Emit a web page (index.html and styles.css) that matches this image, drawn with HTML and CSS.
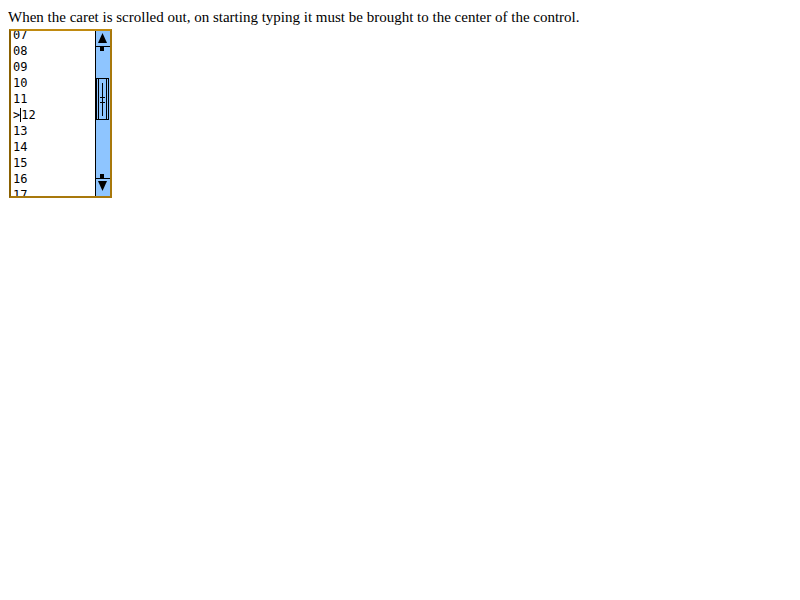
FILE: index.html
```html
<!DOCTYPE html>
<html>
<head>
<meta charset="utf-8">
<link rel="stylesheet" href="styles.css">
</head>
<body>
<p class="intro">When the caret is scrolled out, on starting typing it must be brought to the center of the control.</p>
<div class="box">
  <div class="view">
    <div class="lines">
      <div class="line">07</div>
      <div class="line">08</div>
      <div class="line">09</div>
      <div class="line">10</div>
      <div class="line">11</div>
      <div class="line">&gt;<span class="caret"></span>12</div>
      <div class="line">13</div>
      <div class="line">14</div>
      <div class="line">15</div>
      <div class="line">16</div>
      <div class="line">17</div>
    </div>
  </div>
  <svg class="scroll" width="15" height="165" viewBox="0 0 15 165">
    <rect x="0" y="0" width="15" height="165" fill="#8ec5ff"/>
    <rect x="0" y="0" width="1" height="165" fill="#000"/>
    <rect x="0" y="15" width="15" height="1" fill="#000"/>
    <polygon points="7.5,2 3,12 12,12" fill="#000"/>
    <rect x="5" y="16" width="4" height="4" fill="#000"/>
    <rect x="1.5" y="47.5" width="12" height="41" fill="none" stroke="#000"/>
    <line x1="3.5" y1="48" x2="3.5" y2="88" stroke="#000"/>
    <line x1="11.5" y1="48" x2="11.5" y2="88" stroke="#000"/>
    <line x1="7.5" y1="52" x2="7.5" y2="85" stroke="#000"/>
    <line x1="5" y1="66.5" x2="10" y2="66.5" stroke="#000"/>
    <line x1="5" y1="71.5" x2="10" y2="71.5" stroke="#000"/>
    <rect x="5" y="143" width="4" height="4" fill="#000"/>
    <rect x="0" y="147" width="15" height="1" fill="#000"/>
    <polygon points="3,150 12,150 7.5,160" fill="#000"/>
  </svg>
</div>
</body>
</html>
```

FILE: styles.css
```css
body {
  margin: 8px;
  background: #fff;
  font-family: "Liberation Serif", "Times New Roman", serif;
  font-size: 15px;
  color: #000;
}
.intro {
  margin: 0;
  line-height: 17px;
  padding-top: 1px;
}
.box {
  display: flex;
  width: 99px;
  height: 165px;
  margin: 3px 0 0 1px;
  border: 2px solid #a8780c;
  border-top-color: #c08a10;
  border-left-color: #8a6000;
  background: #fff;
}
.view {
  flex: 1;
  overflow: hidden;
}
.lines {
  margin-top: -4px;
  padding-left: 2px;
  font-family: "DejaVu Sans Mono", monospace;
  font-size: 12px;
  line-height: 16px;
}
.caret {
  display: inline-block;
  width: 1px;
  height: 14px;
  background: #000;
  vertical-align: -3px;
}
.scroll {
  display: block;
  flex: none;
}
```
